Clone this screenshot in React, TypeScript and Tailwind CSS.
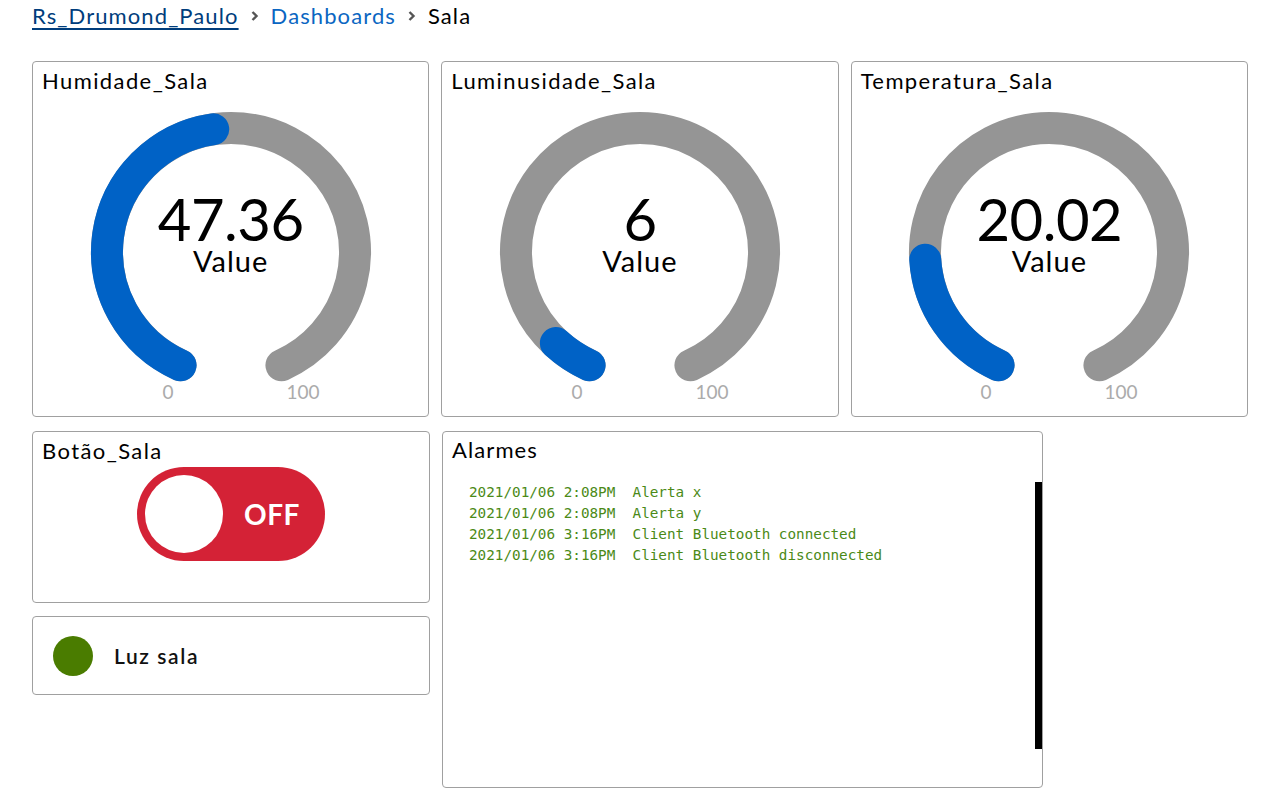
import React from "react";

const CX = 150;
const CY = 150;
const R = 124;
const START = 204;
const SPAN = 312;

function pt(deg: number) {
  const a = (deg * Math.PI) / 180;
  return [CX + R * Math.sin(a), CY - R * Math.cos(a)];
}

function arc(from: number, to: number) {
  const [x1, y1] = pt(from);
  const [x2, y2] = pt(to);
  const large = to - from > 180 ? 1 : 0;
  return `M ${x1.toFixed(2)} ${y1.toFixed(2)} A ${R} ${R} 0 ${large} 1 ${x2.toFixed(2)} ${y2.toFixed(2)}`;
}

function Gauge({ title, value, display }: { title: string; value: number; display: string }) {
  const end = START + (SPAN * value) / 100;
  return (
    <div className="h-[356px] rounded-[4px] border border-[#a0a0a0] bg-white flex flex-col">
      <div className="px-[9px] pt-[6px] text-[22px] leading-[26px] tracking-[1.4px] text-black">{title}</div>
      <div className="flex justify-center mt-[8px]">
        <div className="relative w-[300px] h-[300px]">
          <svg width="300" height="300" viewBox="0 0 300 300">
            <path d={arc(START, START + SPAN)} fill="none" stroke="#959595" strokeWidth="32" strokeLinecap="round" />
            {value > 0 && (
              <path d={arc(START, end)} fill="none" stroke="#0062c6" strokeWidth="32" strokeLinecap="round" />
            )}
            <text x={CX - 63} y={297} textAnchor="middle" fontSize="19" fill="#ababab" style={{ fontFamily: "Lato, sans-serif" }}>
              0
            </text>
            <text x={CX + 72} y={297} textAnchor="middle" fontSize="19" fill="#ababab" style={{ fontFamily: "Lato, sans-serif" }}>
              100
            </text>
          </svg>
          <div className="absolute left-0 right-0 top-[95px] flex flex-col items-center text-black">
            <div className="text-[58px] leading-[44px] tracking-[-0.5px]">{display}</div>
            <div className="mt-[8px] text-[29px] leading-[24px] tracking-[1px]">Value</div>
          </div>
        </div>
      </div>
    </div>
  );
}

function Chevron() {
  return (
    <svg width="12" height="14" viewBox="0 0 12 14" className="mx-[10px]">
      <path d="M3.5 3 L7.5 7 L3.5 11" fill="none" stroke="#555" strokeWidth="2.4" />
    </svg>
  );
}

const logs = [
  "2021/01/06 2:08PM  Alerta x",
  "2021/01/06 2:08PM  Alerta y",
  "2021/01/06 3:16PM  Client Bluetooth connected",
  "2021/01/06 3:16PM  Client Bluetooth disconnected",
];

export default function App() {
  return (
    <div className="w-[1280px] h-[800px] bg-white pl-[32px] font-['Lato',sans-serif] text-black overflow-hidden">
      <div className="flex items-center h-[32px] text-[22px] leading-[28px] tracking-[1.1px]">
        <span className="text-[#003d7c] underline decoration-2 underline-offset-[4px]">Rs_Drumond_Paulo</span>
        <Chevron />
        <span className="text-[#0a66c2]">Dashboards</span>
        <Chevron />
        <span className="text-black">Sala</span>
      </div>

      <div className="grid grid-cols-3 gap-x-[12px] w-[1216px] mt-[29px]">
        <Gauge title="Humidade_Sala" value={47.36} display="47.36" />
        <Gauge title="Luminusidade_Sala" value={6} display="6" />
        <Gauge title="Temperatura_Sala" value={20.02} display="20.02" />
      </div>

      <div className="flex gap-x-[12px] mt-[14px]">
        <div className="w-[398px] flex flex-col gap-y-[13px]">
          <div className="h-[172px] rounded-[4px] border border-[#a0a0a0] flex flex-col">
            <div className="px-[9px] pt-[6px] text-[22px] leading-[26px] tracking-[1.4px]">Botão_Sala</div>
            <div className="flex justify-center mt-[3px]">
              <div className="w-[188px] h-[94px] rounded-full bg-[#d42236] flex items-center pl-[8px]">
                <div className="w-[78px] h-[78px] rounded-full bg-white" />
                <span className="flex-1 text-center pr-[4px] text-white font-bold text-[28px] tracking-[0.5px] leading-none">OFF</span>
              </div>
            </div>
          </div>
          <div className="h-[79px] rounded-[4px] border border-[#a0a0a0] flex items-center pl-[20px]">
            <div className="w-[40px] h-[40px] rounded-full bg-[#4a7c00]" />
            <span className="ml-[21px] text-[21px] font-semibold tracking-[1.6px] text-[#111]">Luz sala</span>
          </div>
        </div>

        <div className="w-[601px] h-[357px] rounded-[4px] border border-[#a0a0a0] flex flex-col">
          <div className="px-[9px] pt-[5px] text-[22px] leading-[26px] tracking-[1.1px]">Alarmes</div>
          <div className="flex mt-[19px] h-[267px]">
            <div className="flex-1 pl-[26px] pt-[0px] font-['DejaVu_Sans_Mono',monospace] text-[14.3px] leading-[21px] text-[#4b8a17] whitespace-pre">
              {logs.map((l) => (
                <div key={l}>{l}</div>
              ))}
            </div>
            <div className="w-[7px] bg-black" />
          </div>
        </div>
      </div>
    </div>
  );
}
